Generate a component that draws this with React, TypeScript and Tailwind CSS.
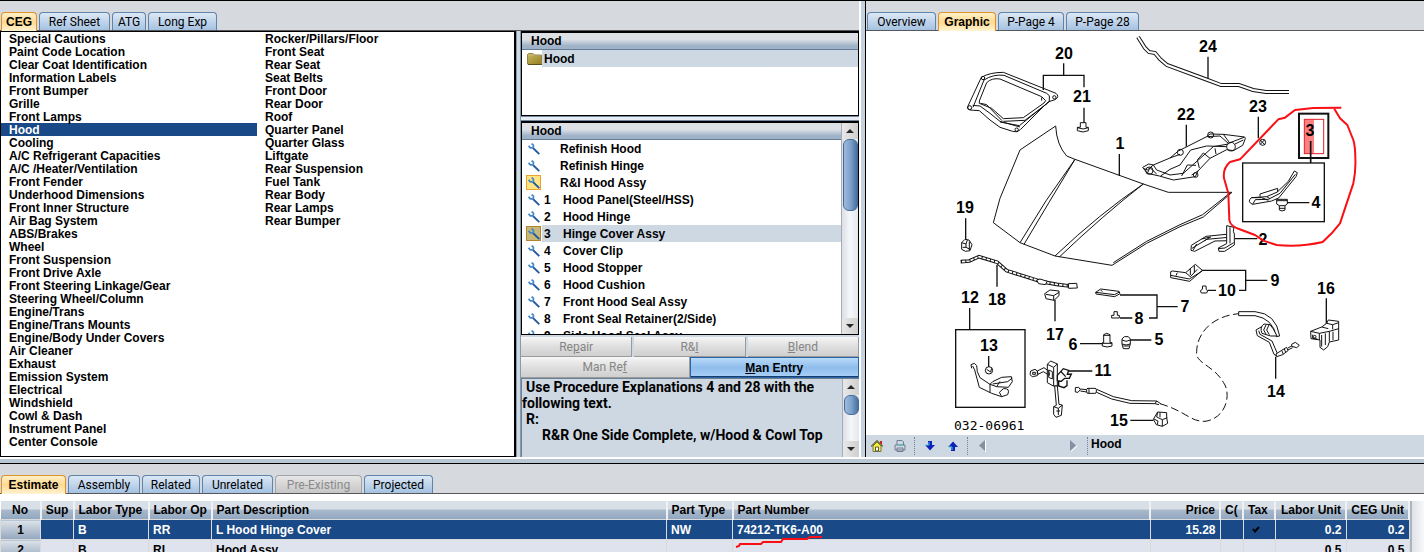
import { useState } from "react"
import clsx from "clsx"

const categories = [
  [
    "Special Cautions", "Paint Code Location", "Clear Coat Identification", "Information Labels",
    "Front Bumper", "Grille", "Front Lamps", "Hood", "Cooling", "A/C Refrigerant Capacities",
    "A/C /Heater/Ventilation", "Front Fender", "Underhood Dimensions", "Front Inner Structure",
    "Air Bag System", "ABS/Brakes", "Wheel", "Front Suspension", "Front Drive Axle",
    "Front Steering Linkage/Gear", "Steering Wheel/Column", "Engine/Trans", "Engine/Trans Mounts",
    "Engine/Body Under Covers", "Air Cleaner", "Exhaust", "Emission System", "Electrical",
    "Windshield", "Cowl & Dash", "Instrument Panel", "Center Console",
  ],
  [
    "Rocker/Pillars/Floor", "Front Seat", "Rear Seat", "Seat Belts", "Front Door", "Rear Door",
    "Roof", "Quarter Panel", "Quarter Glass", "Liftgate", "Rear Suspension", "Fuel Tank",
    "Rear Body", "Rear Lamps", "Rear Bumper",
  ],
]

const parts = [
  { no: "", name: "Refinish Hood" },
  { no: "", name: "Refinish Hinge" },
  { no: "", name: "R&I Hood Assy", marked: true },
  { no: "1", name: "Hood Panel(Steel/HSS)" },
  { no: "2", name: "Hood Hinge" },
  { no: "3", name: "Hinge Cover Assy", marked: true },
  { no: "4", name: "Cover Clip" },
  { no: "5", name: "Hood Stopper" },
  { no: "6", name: "Hood Cushion" },
  { no: "7", name: "Front Hood Seal Assy" },
  { no: "8", name: "Front Seal Retainer(2/Side)" },
  { no: "9", name: "Side Hood Seal Assy" },
]

const cegTabs = [
  { label: "CEG", width: "w-9" },
  { label: "Ref Sheet", width: "w-[71px]" },
  { label: "ATG", width: "w-[34px]" },
  { label: "Long Exp", width: "w-[69px]" },
]

const graphicTabs = [
  { label: "Overview", width: "w-[69px]" },
  { label: "Graphic", width: "w-[58px]" },
  { label: "P-Page 4", width: "w-[66px]" },
  { label: "P-Page 28", width: "w-[73px]" },
]

const estimateTabs = [
  { label: "Estimate", width: "w-[65px]" },
  { label: "Assembly", width: "w-[72px]" },
  { label: "Related", width: "w-[58px]" },
  { label: "Unrelated", width: "w-[71px]" },
  { label: "Pre-Existing", width: "w-[87px]", disabled: true },
  { label: "Projected", width: "w-[69px]" },
]

const columns = [
  { label: "No", width: "w-10", align: "text-center" },
  { label: "Sup", width: "w-[33px]", align: "text-center" },
  { label: "Labor Type", width: "w-[75px]", align: "text-left" },
  { label: "Labor Op", width: "w-[63px]", align: "text-left" },
  { label: "Part Description", width: "w-[455px]", align: "text-left" },
  { label: "Part Type", width: "w-[66px]", align: "text-left" },
  { label: "Part Number", width: "", align: "text-left" },
  { label: "Price", width: "w-[70px]", align: "text-right" },
  { label: "C(", width: "w-[23px]", align: "text-left" },
  { label: "Tax", width: "w-8", align: "text-left" },
  { label: "Labor Unit", width: "w-[71px]", align: "text-right" },
  { label: "CEG Unit", width: "w-[63px]", align: "text-right" },
]

const rows = [
  ["1", "", "B", "RR", "L Hood Hinge Cover", "NW", "74212-TK6-A00", "15.28", "", "check", "0.2", "0.2"],
  ["2", "", "B", "RI", "Hood Assy", "", "", "", "", "", "0.5", "0.5"],
]

type Tab = { label: string; width: string; disabled?: boolean }

function Tabs({ tabs, initial }: { tabs: Tab[]; initial: string }) {
  const [active, setActive] = useState(initial)

  return (
    <div className="flex h-[30px] shrink-0 items-end gap-0.5 border-b border-[#58585c] bg-[#d6d9de] pl-px">
      {tabs.map((tab) => (
        <button
          key={tab.label}
          disabled={tab.disabled}
          onClick={() => setActive(tab.label)}
          className={clsx(
            "shrink-0 whitespace-nowrap rounded-t-sm border border-b-0 text-center text-xs leading-4",
            tab.width,
            tab.label === active
              ? "-mb-px h-[19px] border-[#e0912a] bg-linear-to-b from-[#fff0c8] via-[#ffd98e] to-[#fff3d2] pb-px font-bold"
              : "h-[18px] font-['Roboto',sans-serif] font-normal",
            tab.label !== active &&
              (tab.disabled
                ? "border-[#a4a4a8] bg-linear-to-b from-[#e6e6e6] to-[#c6c6c6] text-[#8a8a8a]"
                : "border-[#5f83a9] bg-linear-to-b from-[#dce8f5] to-[#a5c2e1]")
          )}
        >
          {tab.label}
        </button>
      ))}
    </div>
  )
}

function Wrench() {
  return (
    <svg viewBox="0 0 12 12" className="size-3" fill="none">
      <path d="M5 5 11.300 11.200" stroke="#2058a0" strokeWidth="1.800" />
      <path d="M.6 2.800 2.300 4.900H4.600L5.400 4V2.200L3.600.6" stroke="#4587c8" strokeWidth="1.700" />
    </svg>
  )
}

function Folder() {
  return (
    <svg viewBox="0 0 15 12" className="h-3 w-[15px]">
      <path d="M.5 11V1.5L1.5.5H6L7 2H14.500V11Z" fill="#c7b764" stroke="#92854a" />
      <path d="M1 3H14V11H1Z" fill="url(#folder)" />
      <path d="M1 11.500H15" stroke="#5b4e18" />
      <defs>
        <linearGradient id="folder" x1="0" y1="0" x2="1" y2="1">
          <stop stopColor="#bdb45c" />
          <stop offset="1" stopColor="#9b7d1d" />
        </linearGradient>
      </defs>
    </svg>
  )
}

function ScrollBar({ thumb }: { thumb: string }) {
  return (
    <div className="flex w-[17px] shrink-0 flex-col items-center border-l border-[#a6adb8] bg-linear-to-r from-[#dcdfe6] via-[#f5f7fa] to-[#e4e7ed]">
      <Arrow up />
      <div className={clsx("w-[15px] rounded-md border border-[#456c99] bg-linear-to-r from-[#9dbbdc] via-[#7da1ca] to-[#476f9f]", thumb)} />
      <div className="flex-1" />
      <Arrow />
    </div>
  )
}

function Arrow({ up }: { up?: boolean }) {
  return (
    <div className="flex h-4 w-full shrink-0 items-center justify-center bg-linear-to-r from-[#e8e8e8] to-[#cfcfcf]">
      <svg viewBox="0 0 8 4" className="h-1 w-2">
        <path d={up ? "M0 4 4 0 8 4Z" : "M0 0H8L4 4Z"} fill="#262626" />
      </svg>
    </div>
  )
}

function CategoryList() {
  const [selected, setSelected] = useState("Hood")

  return (
    <div className="flex flex-1 border border-r-2 border-black bg-white">
      {categories.map((column, i) => (
        <ul key={i} className="w-64">
          {column.map((name) => (
            <li key={name}>
              <button
                onClick={() => setSelected(name)}
                className={clsx(
                  "block h-[13px] w-full pl-2 text-left leading-[15px]",
                  name === selected && "bg-[#194a87] text-white"
                )}
              >
                {name}
              </button>
            </li>
          ))}
        </ul>
      ))}
    </div>
  )
}

function PanelHeader() {
  return (
    <div className="h-[17px] shrink-0 border-b border-[#627b97] bg-linear-to-b from-[#dde1e6] from-40% to-[#9fb2c8] to-80% pl-[9px] leading-[17px]">
      Hood
    </div>
  )
}

function PartsPanel() {
  const [selected, setSelected] = useState("Hinge Cover Assy")

  return (
    <div className="flex w-[338px] shrink-0 flex-col">
      <div className="h-[30px] shrink-0 border-b border-[#58585c] bg-[#d6d9de]" />
      <div className="h-[85px] shrink-0 border border-t-2 border-black bg-white">
        <PanelHeader />
        <button className="flex h-[17px] w-full items-center bg-linear-to-r from-white from-[20px] to-[#ced8e3] to-[20px] pl-[5px]">
          <Folder />
          <span className="pl-0.5">Hood</span>
        </button>
      </div>
      <div className="h-[5px] shrink-0 border-y border-[#71879f] bg-[#e6edf4]" />
      <div className="flex h-[214px] shrink-0 border border-t-2 border-black bg-white">
        <div className="flex min-w-0 flex-1 flex-col overflow-hidden">
          <PanelHeader />
          {parts.map((part) => (
            <button
              key={part.name}
              onClick={() => setSelected(part.name)}
              className={clsx(
                "flex h-[17px] w-full shrink-0 items-center pl-1 text-left",
                part.name === selected && "bg-linear-to-r from-white from-[20px] to-[#ced8e3] to-[20px]"
              )}
            >
              <span
                className={clsx(
                  "flex size-[15px] shrink-0 items-center justify-center",
                  part.marked && part.name !== selected && "border border-[#f0a02c] bg-[#ffe483]",
                  part.marked && part.name === selected && "border border-[#b58330] bg-[#c6b878]"
                )}
              >
                <Wrench />
              </span>
              <span className={clsx("pl-[3px]", part.no ? "w-[22px]" : "w-[19px]")}>{part.no}</span>
              <span>{part.name}</span>
            </button>
          ))}
        </div>
        <ScrollBar thumb="h-[72px]" />
      </div>
      <div className="mt-0.5 flex h-5 shrink-0 gap-0.5">
        <PlainButton before="Re" hotkey="p" after="air" />
        <PlainButton before="R&" hotkey="I" after="" />
        <PlainButton before="" hotkey="B" after="lend" />
      </div>
      <div className="flex h-[21px] shrink-0">
        <PlainButton before="Man Re" hotkey="f" after="" />
        <button className="flex-1 border border-[#2c65a5] bg-linear-to-b from-[#b9dafa] via-[#8fbdec] to-[#a9d0f7] leading-[18px] shadow-[inset_0_-1px_0_#163f70]">
          <u>M</u>an Entry
        </button>
      </div>
      <div className="flex flex-1 border-l border-t border-[#6d7f92] bg-[#ced8e3]">
        <div className="flex-1 font-['Roboto',sans-serif] text-sm leading-4">
          <p className="indent-1">Use Procedure Explanations 4 and 28 with the following text.</p>
          <p className="indent-1">R:</p>
          <p className="indent-5">R&R One Side Complete, w/Hood & Cowl Top</p>
        </div>
        <ScrollBar thumb="h-5" />
      </div>
    </div>
  )
}

function PlainButton({ before, hotkey, after }: { before: string; hotkey: string; after: string }) {
  return (
    <button
      disabled
      className="flex-1 border-b border-r border-[#9b9b9b] bg-linear-to-b from-[#f6f6f6] via-[#dfdfdf] to-[#cfcfcf] font-['Roboto',sans-serif] font-normal leading-[18px] text-[#858585]"
    >
      {before}<u>{hotkey}</u>{after}
    </button>
  )
}

function Tube({ d, width = 4 }: { d: string; width?: number }) {
  return (
    <>
      <path d={d} fill="none" stroke="#111" strokeWidth={width} />
      <path d={d} fill="none" stroke="#fff" strokeWidth={width - 2} />
    </>
  )
}

const callouts = [
  ["20", 1064, 59], ["21", 1082, 102], ["24", 1208, 52], ["1", 1120, 149], ["22", 1186, 120],
  ["23", 1258, 112], ["3", 1310, 136], ["4", 1316, 208], ["2", 1263, 245], ["19", 965, 213],
  ["12", 970, 303], ["18", 997, 305], ["17", 1055, 340], ["13", 989, 351], ["6", 1073, 350],
  ["5", 1159, 345], ["8", 1139, 324], ["7", 1185, 312], ["10", 1227, 296], ["9", 1275, 286],
  ["16", 1326, 294], ["14", 1276, 397], ["11", 1103, 376], ["15", 1119, 426],
] as const

function HoodDiagram() {
  return (
    <svg viewBox="866 31 558 404" preserveAspectRatio="xMinYMin meet" className="h-full w-full">
      <g transform="translate(940 30) scale(.333333)" fill="none" stroke="#111" strokeWidth="3">
        {/* insulator */}
        <path d="M84 228 124 142Q150 127 190 127L348 190Q360 200 345 209L324 216 242 298Q232 310 218 304L180 292 150 270 118 242 90 240Q78 236 84 228Z" />
        <path d="M99 232 132 150Q160 132 192 136L320 190 328 197V215M98 226 120 228 150 250 180 274 240 291M328 215 238 287 180 276" />
        <path d="M118 213 140 158Q155 143 180 147L305 200 317 212 312 219 250 263 190 266 155 235 118 220Z" />
        <path d="M190 274 255 271 322 220M122 220 140 224 186 272M305 202V212" />
        <circle cx="129" cy="144" r="5" /><circle cx="89" cy="233" r="6" /><circle cx="343" cy="202" r="5" /><circle cx="230" cy="299" r="5" />
        <path strokeWidth="4" d="M371 100V136M310 180V136H432V172M432 233V280M538 372V438" />
        <path fill="#fff" d="M421 278H438V292H445V302Q430 310 412 302V292H421Z" />
        <path d="M412 293Q430 301 445 293" />
        {/* hood panel */}
        <path d="M347 288 240 360 180 505 160 578 240 638 345 678 516 706 620 640 720 590 790 561 876 487 685 487 610 462 405 388 380 378Q350 345 347 288Z" />
        <path d="M405 388Q315 510 240 638M405 388Q325 520 252 643M610 462Q480 550 345 678M610 462Q490 555 358 681M520 698 620 634 720 584 788 554 870 489" />
      </g>

      <Tube d="M1138 37 1145 48 1149 52 1155 53 1160 59 1167 65 1205 79 1221 85H1239L1253 90 1266 92H1289" />

      <g transform="translate(1120 30) scale(.333333)" fill="none" stroke="#111" strokeWidth="3">
        <path strokeWidth="4" d="M264 80V145M199 284V350M415 260V325M497 518H568M345 626H412" />
        {/* cowl duct */}
        <path fill="#fff" d="M68 412 86 402 100 405 150 384 175 363 260 320 270 312 310 313 374 321 376 326 368 346 340 362 320 359 270 385 234 423 226 440 160 450 118 438 82 430Z" />
        <path d="M100 405 110 420 150 435 190 430 280 350 325 342M150 384 180 373M260 320 300 318 325 340 372 322M122 438 150 418 180 405 212 360 260 348 320 350M185 438 202 405 228 406M234 423 215 435M270 385 250 369 232 390 238 414M288 372 285 355M82 430 90 413 110 432M70 415 82 420 100 405M345 342 370 330M310 313 330 340" />
        <circle cx="181" cy="367" r="9" /><circle cx="333" cy="350" r="13" /><circle cx="272" cy="315" r="9" /><circle cx="227" cy="435" r="7" /><circle cx="88" cy="422" r="11" />
        <circle cx="428" cy="337" r="9" /><path d="M421 330 435 345M421 343 434 329" />
        {/* hinge cover and clip */}
        <rect x="368" y="399" width="245" height="176" strokeWidth="4" />
        <rect x="537" y="251" width="88" height="133" strokeWidth="6" />
        <rect x="553" y="268" width="29" height="103" fill="#ff8080" stroke="none" />
        <rect x="553" y="268" width="58" height="103" stroke="#e5202b" />
        <path strokeWidth="5" d="M572 333V399" />
        <path d="M523 423 532 428 528 440 476 504 455 513 398 523Q380 516 394 503L440 500 472 486 505 454ZM398 523 406 509 445 508 480 490 526 433M394 503 425 503 445 511M420 500V492L473 475V486M440 500 450 506" />
        <path fill="#fff" d="M470 508H502V522L495 527V540Q486 546 478 540V527L470 522ZM478 527H495M470 512H502M478 535H495" />
        {/* hinge */}
        <path fill="#fff" d="M214 646 258 619 318 613 330 624V632L285 633 224 664 213 661Z" />
        <path d="M216 655 260 628 325 622M230 642 220 660M245 627 272 621 252 633" />
        <path fill="#fff" d="M320 587 342 592 340 604 343 612V645L314 664H297L295 654 320 641V606ZM330 592V640M295 656 315 654 341 638" />
      </g>

      <g transform="translate(940 190) scale(.333333)" fill="none" stroke="#111" strokeWidth="3">
        <path strokeWidth="4" d="M77 85V152M171 225V290M89 354V418M345 330V394M146 498V530M540 315H651V384H627M651 350H713M540 384H577M420 461H487M568 450H634M386 543H457M571 691H640" />
        <rect x="47" y="419" width="208" height="233" strokeWidth="4" />
        {/* plug */}
        <path fill="#fff" d="M65 158 75 148 87 150 96 164 90 182 76 184 65 178Z" />
        <path d="M68 172H78V162L65 158M78 162 82 150M78 172 90 178M88 155V180" />
        {/* rod */}
        <path strokeWidth="11" d="M62 215 88 213 117 200 172 217 200 242 305 275 350 283 388 288" />
        <path stroke="#fff" strokeWidth="5" strokeDasharray="10 3" d="M66 215 88 213 117 200 172 217 200 242 305 275 350 283 388 288" />
        <path fill="#fff" d="M290 270 300 267 322 274 316 284 296 281ZM385 281 410 280 412 294 386 295Z" />
        <path fill="#fff" d="M314 311 330 300 357 303V317L342 331 318 326ZM318 313 341 317 357 307M341 317V331" />
        {/* seal and retainer */}
        <path fill="#fff" d="M467 307 482 297 537 304 540 311 524 320 468 312ZM467 307 524 314 538 306M482 300 487 305" />
        <path fill="#fff" d="M522 365H532V376H538V384H515V376H522Z" />
        <path fill="#fff" d="M491 434Q500 426 510 434V458H516V468Q501 474 487 468V458H491ZM487 460H516M491 436H510" />
        <path fill="#fff" d="M546 447 553 440H565L571 447V462L567 476H550L546 462ZM546 450Q558 458 571 450M546 462Q558 468 571 462M550 468H568" />
        {/* lever */}
        <path d="M95 535 93 524 103 520 110 527 112 545 120 563 150 583 158 575 185 562 214 560 217 575 205 592 170 590 150 583M104 540 118 592 155 610 185 620 203 614Q212 594 190 596L178 607 185 620M150 583V608M158 582 203 575 217 564M170 590 180 574M98 528 104 540" />
        <circle cx="147" cy="541" r="11" /><path d="M140 538 152 546 155 535" />
        {/* latch */}
        <path fill="#fff" d="M272 543 285 538 292 543V557L277 560 270 554ZM278 547H286V553H278ZM292 543 312 533 328 545V556L310 545 294 553Z" />
        <path fill="#fff" d="M322 523 332 513 352 522V588H340L322 578ZM322 523 341 532V588M341 532 352 522M326 540V562L337 567V545Z" />
        <path fill="#fff" strokeWidth="4" d="M352 556 370 536 386 541 382 553 394 552 388 565H374L364 574 352 572ZM356 572V588L372 593 381 587V571M363 545 377 560" />
        <path fill="#fff" d="M344 588 349 646 341 650V673L348 682 364 676 367 645 357 643 352 588ZM341 650 355 655 366 646M355 655V675M349 663H360" />
        {/* cable */}
        <path fill="#fff" d="M406 593 416 592 421 599 414 607 406 606ZM421 597 440 599M421 603 440 606" />
        <path d="M470 598 520 620 575 632 650 633 662 641M470 607 515 627 570 640 645 641 657 644M650 633 645 641" />
        <rect x="440" y="595" width="29" height="15" rx="4" fill="#fff" /><path d="M447 595V610" />
        <path fill="#fff" d="M640 688 653 666 680 668V683L683 700 667 709 649 704ZM653 666 650 681 667 689 682 683M667 689V709M642 687 654 693 652 704M660 667V682" />
      </g>

      <g transform="translate(1140 220) scale(.333333)" fill="none" stroke="#111" strokeWidth="3">
        <path strokeWidth="4" d="M185 151H317V211H297M317 181H382M203 211H228M559 235V312M407 410V476" />
        <path fill="#fff" d="M92 155 98 153 137 158 166 133 187 151 149 184 92 173ZM92 166 148 177 187 153M137 158 151 170 172 148M151 145V165M112 158 108 167M163 136V158" />
        <path fill="#fff" d="M188 198H198L199 209 203 213 200 219H184L181 212 187 208Z" />
        {/* release cable */}
        <path strokeDasharray="24 11" d="M60 551C140 575 150 605 195 604C260 595 275 520 250 487C220 435 165 430 170 395C170 350 205 290 296 281" />
        <path fill="#fff" d="M296 275H345Q408 280 419 348L409 350Q399 296 345 287H296Z" />
        <path fill="#fff" d="M372 312 390 314 400 327 411 348H392L366 340Q358 322 372 312ZM378 315 371 330 378 342M387 315 380 330 388 344M365 320 348 330 352 347 388 367 402 403 410 408 411 398 396 363 360 343 356 332" />
        <path fill="#fff" d="M408 402 425 391 440 382 444 392 428 404 410 410ZM425 391 430 403M433 387 437 397M444 384 455 378M444 390 458 383M455 373 466 367 478 376 470 383 455 379Z" />
        {/* switch bracket */}
        <path fill="#fff" d="M512 334 545 321 560 310 565 300 596 304V360L568 366 563 380 551 390 540 382V360L513 356Z" />
        <path d="M512 334 538 340V360M518 344V355L532 357M538 340 568 334 596 326M545 345V380M556 340V375M568 334V365M579 335V360M560 310 578 314 596 308M578 314V328M545 321 565 326" />
        <circle cx="524" cy="350" r="4" />
      </g>

      {callouts.map(([label, x, y]) => (
        <text key={label} x={x} y={y} textAnchor="middle" className="text-base font-bold">
          {label}
        </text>
      ))}
      <text x="954" y="430" className="font-['DejaVu_Sans_Mono',monospace] text-[13px] font-normal">032-06961</text>

      <path
        transform="translate(1120 30) scale(.333333)"
        fill="none"
        stroke="#fa0f14"
        strokeWidth="6"
        strokeLinejoin="round"
        d="M664 233 580 234 525 240 495 263 475 268 360 388 330 396Q308 415 312 445L325 490 328 570Q330 590 365 600L405 615 430 632 470 645Q540 652 608 636L635 610 660 580 675 535 690 490 700 460Q708 420 706 385Q706 350 700 330L682 285 660 265 641 233"
      />
    </svg>
  )
}

function GraphicToolbar() {
  return (
    <div className="flex h-[22px] shrink-0 items-center bg-[#ced8e3]">
      <button aria-label="Home" className="ml-[5px] flex size-3 justify-center">
        <svg viewBox="0 0 12 12" className="size-3">
          <path d="M2 6V11.500H10V6L6 2Z" fill="#f5ee36" stroke="#77773a" />
          <path d="M0 6.500 6 .8 12 6.500" fill="none" stroke="#73733b" strokeWidth="1.500" />
          <path d="M9 1H11V5L9 3Z" fill="#c81e2d" />
          <path d="M4.500 7H7.500V11H4.500Z" fill="#fff" stroke="#555" />
        </svg>
      </button>
      <button aria-label="Print" className="ml-[11px] flex size-3">
        <svg viewBox="0 0 12 12" className="size-3" fill="none" stroke="#6f7c8c">
          <path d="M3 5V.5H8L9.500 2V5M1 5H11V10H1ZM3 8H9V11.500H3Z" />
          <path d="M5 5H9" stroke="#28c9cf" />
        </svg>
      </button>
      <span className="ml-2 h-[18px] border-l border-dotted border-[#718096]" />
      <button aria-label="Down" className="ml-2.5 flex size-[10px]">
        <svg viewBox="0 0 10 10"><path d="M3 0H7V4H10L5 9.500.2 4H3Z" fill="#1020b8" /><path d="M1 4H4V1" fill="none" stroke="#38d4e0" /></svg>
      </button>
      <button aria-label="Up" className="ml-[13px] flex size-[10px]">
        <svg viewBox="0 0 10 10"><path d="M3 10H7V6H10L5 .5.2 6H3Z" fill="#1020b8" /><path d="M1 6H4V9" fill="none" stroke="#38d4e0" /></svg>
      </button>
      <span className="ml-[9px] h-[18px] border-l border-dotted border-[#718096]" />
      <button aria-label="Previous" className="ml-[11px] flex">
        <svg viewBox="0 0 7 12" className="h-3 w-[7px]"><path d="M6 0V11L0 5.500Z" fill="#8290a1" /><path d="M6.500 0V12" stroke="#fff" /></svg>
      </button>
      <button aria-label="Next" className="ml-[84px] flex">
        <svg viewBox="0 0 7 12" className="h-3 w-[7px]"><path d="M0 0V11L6 5.500Z" fill="#8290a1" /><path d="M1 11.500 7 6" stroke="#fff" /></svg>
      </button>
      <span className="ml-2.5 h-[18px] border-l border-dotted border-[#718096]" />
      <span className="ml-[3px] pb-1 leading-4">Hood</span>
    </div>
  )
}

function EstimateTable() {
  return (
    <div className="flex flex-1 overflow-hidden bg-white pt-[7px]">
      <table className="w-full table-fixed border-collapse">
        <thead>
          <tr className="h-[18px]">
            {columns.map((col) => (
              <th
                key={col.label}
                className={clsx(
                  "overflow-hidden whitespace-nowrap border-r-2 border-[#eef0f3] bg-linear-to-b from-[#d9dfe6] from-45% via-[#a9b9cb] via-50% to-[#91a7c1] px-1 leading-[18px]",
                  col.width,
                  col.align
                )}
              >
                {col.label}
              </th>
            ))}
          </tr>
        </thead>
        <tbody>
          {rows.map((row, i) => (
            <tr key={i} className={clsx("h-5", i === 0 ? "bg-[#194a87] text-white" : "bg-[#dee3ee]")}>
              {row.map((cell, j) => (
                <td
                  key={j}
                  className={clsx(
                    "border border-[#dadada] px-1 leading-[18px]",
                    columns[j].align,
                    j === 0 && "bg-linear-to-b from-[#dde2e8] to-[#93a7bf] text-black",
                    j === 6 && "relative"
                  )}
                >
                  {cell === "check" ? (
                    <svg viewBox="0 0 8 7" className="ml-1 h-[7px] w-2">
                      <path d="M1 3 3 5.500 7 1" fill="none" stroke="#000" strokeWidth="2" />
                    </svg>
                  ) : (
                    cell
                  )}
                  {j === 6 && i === 0 && (
                    <svg viewBox="0 0 88 13" className="absolute left-0.5 top-4 h-[13px] w-[88px]">
                      <path d="M1 11 4 10 5 8H26L28 6H46L48 3H72L75 1H87" fill="none" stroke="#fa0f14" strokeWidth="2" />
                    </svg>
                  )}
                </td>
              ))}
            </tr>
          ))}
        </tbody>
      </table>
      <div className="w-3.5 shrink-0 border-l-2 border-[#aeb4be] bg-linear-to-r from-[#dfe2e8] to-[#f7f8fa]" />
    </div>
  )
}

export default function App() {
  return (
    <div className="flex h-screen flex-col overflow-hidden bg-[#ced8e3] font-['Liberation_Sans',Arial,sans-serif] text-xs font-bold text-black">
      <div className="flex min-h-0 flex-1 border-t border-black">
        <section className="flex w-[516px] shrink-0 flex-col">
          <Tabs tabs={cegTabs} initial="CEG" />
          <CategoryList />
        </section>
        <div className="flex w-[5px] shrink-0 flex-col">
          <div className="h-[30px] shrink-0 border-b border-[#58585c] bg-[#d6d9de]" />
          <div className="flex-1 border-x border-[#8799ad] bg-[#ced8e3]" />
        </div>
        <PartsPanel />
        <div className="w-[7px] shrink-0 border-l-2 border-r border-l-white border-r-black bg-[#c5d1df]" />
        <section className="flex min-w-0 flex-1 flex-col">
          <Tabs tabs={graphicTabs} initial="Graphic" />
          <div className="min-h-0 flex-1 bg-white">
            <HoodDiagram />
          </div>
          <GraphicToolbar />
        </section>
      </div>
      <div className="h-[7px] shrink-0 border-b border-t-2 border-b-black border-t-white bg-[#b9c6d4]" />
      <section className="flex h-[88px] shrink-0 flex-col">
        <Tabs tabs={estimateTabs} initial="Estimate" />
        <EstimateTable />
      </section>
    </div>
  )
}
